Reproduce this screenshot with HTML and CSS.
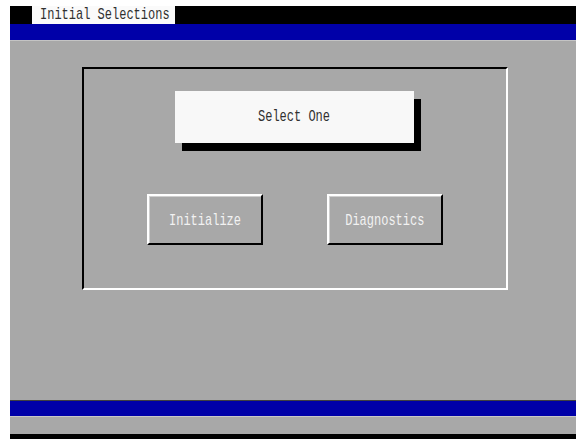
FILE: index.html
```html
<!DOCTYPE html>
<html>
<head>
<meta charset="utf-8">
<title>Initial Selections</title>
<link rel="stylesheet" href="styles.css">
</head>
<body>
  <div class="screen">
    <div class="titlebar">
      <div class="tab"><span class="txt txt-left">Initial Selections</span></div>
    </div>
    <div class="bluebar top"></div>
    <div class="main">
      <div class="frame">
        <div class="prompt"><span class="txt">Select One</span></div>
        <div class="buttons">
          <div class="btn"><span class="txt">Initialize</span></div>
          <div class="btn"><span class="txt">Diagnostics</span></div>
        </div>
      </div>
    </div>
    <div class="bluebar bottom"></div>
    <div class="status"></div>
  </div>
  <div class="foot"></div>
</body>
</html>
```

FILE: styles.css
```css
html, body {
  margin: 0;
  padding: 0;
  background: #ffffff;
  width: 576px;
  height: 439px;
  overflow: hidden;
}

body {
  font-family: "Liberation Mono", "DejaVu Sans Mono", monospace;
  font-size: 16px;
}

.screen {
  margin: 6px 0 0 10px;
  height: 428px;
  display: flex;
  flex-direction: column;
  background: #a8a8a8;
}

/* narrow terminal-style glyphs */
.txt {
  display: inline-block;
  transform: scale(0.75, 1.05);
  white-space: nowrap;
}
.txt-left {
  transform-origin: left center;
}

.titlebar {
  height: 18px;
  background: #000;
  display: flex;
}

.tab {
  margin-left: 22px;
  width: 143px;
  height: 18px;
  background: #fafafa;
  color: #303030;
  padding-left: 8px;
  box-sizing: border-box;
  line-height: 19px;
  overflow: hidden;
}

.bluebar {
  height: 16px;
  background: #0000a8;
}
.bluebar.top {
  border-bottom: 1px solid #c4c4c4;
}
.bluebar.bottom {
  border-top: 1px solid #404040;
  border-bottom: 1px solid #c8c8c8;
  height: 15px;
}

.main {
  flex: 1;
  padding: 26px 0 0 72px;
}

.frame {
  width: 426px;
  height: 223px;
  box-sizing: border-box;
  border-top: 2px solid #000;
  border-left: 2px solid #000;
  border-right: 2px solid #fff;
  border-bottom: 2px solid #fff;
  padding: 22px 0 0 91px;
}

.prompt {
  width: 239px;
  height: 52px;
  background: #f8f8f8;
  color: #303030;
  box-shadow: 7px 8px 0 #000;
  display: flex;
  align-items: center;
  justify-content: center;
}

.buttons {
  display: flex;
  gap: 64px;
  margin: 51px 0 0 -28px;
}

.btn {
  width: 116px;
  height: 51px;
  box-sizing: border-box;
  border-top: 2px solid #fff;
  border-left: 2px solid #fff;
  border-right: 2px solid #000;
  border-bottom: 2px solid #000;
  box-shadow: inset 1px 1px 0 #cfcfcf;
  color: #f2f2f2;
  display: flex;
  align-items: center;
  justify-content: center;
  padding-top: 2px;
}

.status {
  height: 17px;
}

.foot {
  margin-left: 10px;
  height: 5px;
  background: #000;
}
```
